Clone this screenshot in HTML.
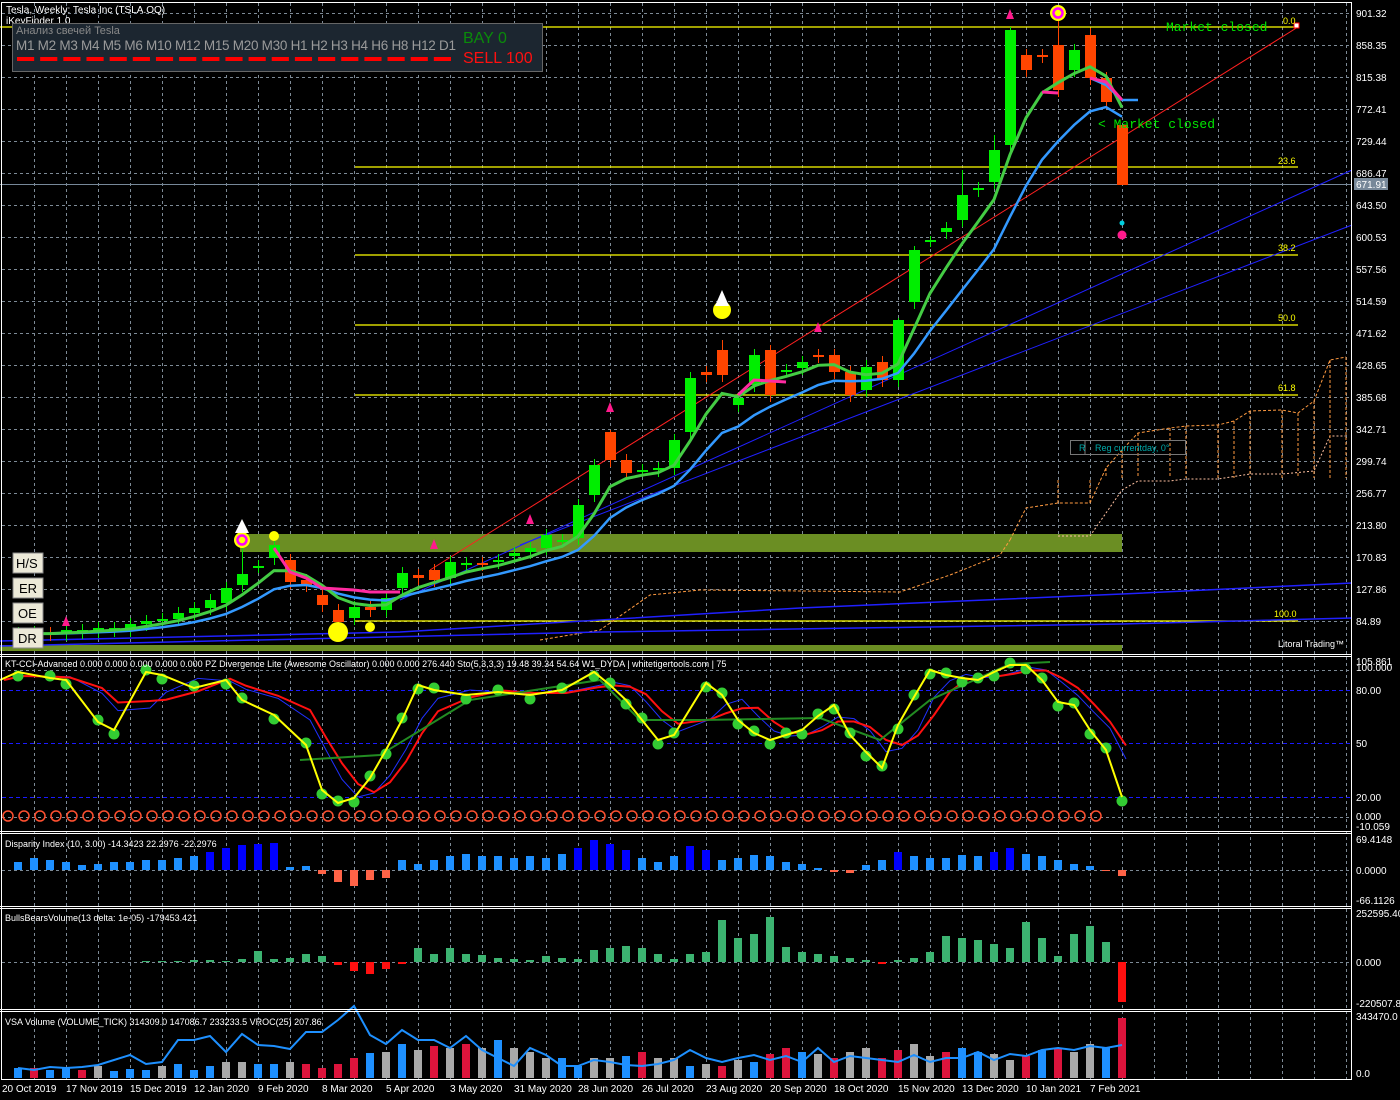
<!DOCTYPE html>
<html><head><meta charset="utf-8"><style>
html,body{margin:0;padding:0;background:#000;width:1400px;height:1100px;overflow:hidden}
svg{display:block}
text{font-family:"Liberation Sans",sans-serif;font-size:10px;fill:#fff}
.ax{font-size:10px;fill:#fff}
.mono{font-family:"Liberation Mono",monospace;font-size:13px;fill:#00e600}
.btn{fill:#ece9d8;stroke:#888}
.bt{font-size:13px;fill:#000}
</style></head><body>
<svg id="s" width="1400" height="1100" viewBox="0 0 1400 1100" xmlns="http://www.w3.org/2000/svg">
<rect width="1400" height="1100" fill="#000"/>
<g id="grid"></g>
<g id="draw"></g>
<g stroke="#fff" stroke-width="1" fill="none">
<rect x="1.5" y="2.5" width="1350" height="1077"/>
<line x1="0" y1="654.5" x2="1352" y2="654.5"/><line x1="0" y1="656.5" x2="1352" y2="656.5"/>
<line x1="0" y1="831.5" x2="1352" y2="831.5"/><line x1="0" y1="833.5" x2="1352" y2="833.5"/>
<line x1="0" y1="906.5" x2="1352" y2="906.5"/><line x1="0" y1="908.5" x2="1352" y2="908.5"/>
<line x1="0" y1="1009.5" x2="1352" y2="1009.5"/><line x1="0" y1="1011.5" x2="1352" y2="1011.5"/>
</g>
<text x="6" y="13">Tesla, Weekly:  Tesla Inc (TSLA.OQ)</text>
<text x="6" y="24">iKeyFinder 1.0</text>
<rect x="12.5" y="23.5" width="530" height="48" fill="#1c2630" stroke="#666"/>
<text x="16" y="34" style="font-size:11px;fill:#888">Анализ свечей Tesla</text>
<text x="16" y="50" style="font-size:13.5px;fill:#9a9a9a" textLength="440">M1 M2 M3 M4 M5 M6 M10 M12 M15 M20 M30 H1 H2 H3 H4 H6 H8 H12 D1</text>
<g id="dashes"></g>
<text x="463" y="43" style="font-size:16px;fill:#0a8a0a">BAY  0</text>
<text x="463" y="63" style="font-size:16px;fill:#ff1010">SELL 100</text>
<text x="1166" y="31" class="mono">Market closed</text>
<text x="1098" y="128" class="mono">&lt; Market closed</text>
<text x="1283" y="24" style="fill:#ff0;font-size:9px">0.0</text>
<text x="1278" y="164" style="fill:#ff0;font-size:9px">23.6</text>
<text x="1278" y="251" style="fill:#ff0;font-size:9px">38.2</text>
<text x="1278" y="321" style="fill:#ff0;font-size:9px">50.0</text>
<text x="1278" y="391" style="fill:#ff0;font-size:9px">61.8</text>
<text x="1274" y="617" style="fill:#ff0;font-size:9px">100.0</text>
<rect x="1070.5" y="440.5" width="115" height="14" fill="none" stroke="#777"/>
<line x1="1085" y1="441" x2="1085" y2="454" stroke="#777"/>
<text x="1079" y="451" style="fill:#0aa;font-size:9px">R</text>
<text x="1095" y="451" style="fill:#0aa;font-size:9px">Reg currentday, 0°</text>
<text x="1278" y="647" style="font-size:9px">Litoral Trading™</text>
<rect class="btn" x="13" y="553" width="30" height="20"/><text class="bt" x="16" y="568">H/S</text>
<rect class="btn" x="13" y="578" width="30" height="20"/><text class="bt" x="19" y="593">ER</text>
<rect class="btn" x="13" y="603" width="30" height="20"/><text class="bt" x="18" y="618">OE</text>
<rect class="btn" x="13" y="628" width="30" height="20"/><text class="bt" x="18" y="643">DR</text>
<g id="axis" class="ax"></g>
<rect x="1354" y="178" width="34" height="12" fill="#778899"/>
<text x="1356" y="188" style="fill:#fff">671.91</text>
<text x="5" y="667" style="font-size:9px">KT-CCI-Advanced 0.000 0.000 0.000 0.000 0.000 PZ Divergence Lite (Awesome Oscillator) 0.000 0.000 276.440 Sto(5,3,3,3) 19.48 39.34 54.64 W1_DYDA  | whitetigertools.com | 75</text>
<text x="5" y="847" style="font-size:9px">Disparity Index (10, 3.00) -14.3423 22.2976 -22.2976</text>
<text x="5" y="921" style="font-size:9px">BullsBearsVolume(13  delta: 1e-05)  -179453.421</text>
<text x="5" y="1025" style="font-size:9px">VSA Volume (VOLUME_TICK) 314309.0 147086.7 233233.5 VROC(25) 207.86</text>
<g class="ax" style="font-size:9px">
<text x="1356" y="665">105.861</text><text x="1356" y="671">100.000</text>
<text x="1356" y="694">80.00</text><text x="1356" y="747">50</text>
<text x="1356" y="801">20.00</text><text x="1356" y="820">0.000</text><text x="1356" y="830">-10.059</text>
<text x="1356" y="843">69.4148</text><text x="1356" y="874">0.0000</text><text x="1356" y="904">-66.1126</text>
<text x="1356" y="917">252595.40</text><text x="1356" y="966">0.000</text><text x="1356" y="1007">-220507.8</text>
<text x="1356" y="1020">343470.0</text><text x="1356" y="1077">0.0</text>
</g>
<g style="font-size:9px">
<text x="2" y="1092">20 Oct 2019</text><text x="66" y="1092">17 Nov 2019</text><text x="130" y="1092">15 Dec 2019</text>
<text x="194" y="1092">12 Jan 2020</text><text x="258" y="1092">9 Feb 2020</text><text x="322" y="1092">8 Mar 2020</text>
<text x="386" y="1092">5 Apr 2020</text><text x="450" y="1092">3 May 2020</text><text x="514" y="1092">31 May 2020</text>
<text x="578" y="1092">28 Jun 2020</text><text x="642" y="1092">26 Jul 2020</text><text x="706" y="1092">23 Aug 2020</text>
<text x="770" y="1092">20 Sep 2020</text><text x="834" y="1092">18 Oct 2020</text><text x="898" y="1092">15 Nov 2020</text>
<text x="962" y="1092">13 Dec 2020</text><text x="1026" y="1092">10 Jan 2021</text><text x="1090" y="1092">7 Feb 2021</text>
</g>
</svg>
<script>
(function(){
var NS="http://www.w3.org/2000/svg";
function el(p,t,a){var e=document.createElementNS(NS,t);for(var k in a)e.setAttribute(k,a[k]);p.appendChild(e);return e;}
var G=document.getElementById('grid'),D=document.getElementById('draw'),A=document.getElementById('axis');
var gs={stroke:"#7d8a96","stroke-width":1,"stroke-dasharray":"3,3"};
var i,x,y,v,cx,col;
for(x=34;x<1352;x+=32){el(G,'line',Object.assign({x1:x+.5,y1:3,x2:x+.5,y2:1080},gs));}
var lab=["901.32","858.35","815.38","772.41","729.44","686.47","643.50","600.53","557.56","514.59","471.62","428.65","385.68","342.71","299.74","256.77","213.80","170.83","127.86","84.89"];
for(i=0;i<20;i++){y=13+32*i;el(G,'line',Object.assign({x1:2,y1:y+.5,x2:1352,y2:y+.5},gs));var t=el(A,'text',{x:1356,y:y+4});t.textContent=lab[i];}
[690,743,797].forEach(function(yy){el(G,'line',{x1:2,y1:yy+.5,x2:1352,y2:yy+.5,stroke:"#1a1aff","stroke-dasharray":"4,3"});});
[670,817,870,962].forEach(function(yy){el(G,'line',Object.assign({x1:2,y1:yy+.5,x2:1352,y2:yy+.5},gs));});
var dh=document.getElementById('dashes');
for(i=0;i<19;i++){var xx=16+i*(440/19);el(dh,'rect',{x:xx+1,y:57,width:(440/19)-6,height:4,fill:"#ff0000"});}
el(D,'rect',{x:240,y:534,width:882,height:18,fill:"#6b8e23"});
el(D,'rect',{x:0,y:645,width:1122,height:6,fill:"#6b8e23"});
[27,167,255,325,395,621].forEach(function(yy){el(D,'line',{x1:355,y1:yy,x2:1298,y2:yy,stroke:"#ffff00","stroke-width":1.3});});
el(D,'line',{x1:0,y1:184.5,x2:1352,y2:184.5,stroke:"#778899"});
el(D,'line',{x1:0,y1:27,x2:355,y2:27,stroke:"#ffff00","stroke-width":1.3});
var tp=[[1010,540],[1026,508],[1058,503],[1090,503],[1106,468],[1122,450],[1138,433],[1170,428],[1186,426],[1218,425],[1234,421],[1250,411],[1282,410],[1298,413],[1314,401],[1330,360],[1346,357]];
var bt=[[1058,536],[1090,536],[1122,490],[1138,481],[1170,481],[1186,479],[1218,479],[1250,474],[1282,474],[1314,471],[1330,436],[1346,436]];
el(D,'polyline',{points:tp.map(function(p){return p.join(',')}).join(' '),fill:"none",stroke:"#ff9a40","stroke-dasharray":"3,2"});
el(D,'polyline',{points:bt.map(function(p){return p.join(',')}).join(' '),fill:"none",stroke:"#ffc0a0","stroke-dasharray":"2,2"});
for(i=0;i<tp.length;i++){var tx=tp[i][0];if(tx>=1058){el(D,'line',{x1:tx,y1:tp[i][1],x2:tx,y2:478,stroke:"#ff9a40","stroke-dasharray":"3,2"});}}
el(D,'polyline',{points:"540,640 600,630 650,595 700,590 900,592 950,575 1000,555 1010,540",fill:"none",stroke:"#ff9a40","stroke-dasharray":"3,2"});
el(D,'line',{x1:430,y1:570,x2:1298,y2:27,stroke:"#ff2020"});
el(D,'line',{x1:400,y1:600,x2:1352,y2:170,stroke:"#2020ff"});
el(D,'line',{x1:520,y1:545,x2:1352,y2:225,stroke:"#2020ff"});
el(D,'polyline',{points:"0,641 400,632 800,608 1122,594 1352,583",fill:"none",stroke:"#2020ff","stroke-width":1.5});
el(D,'polyline',{points:"0,646 600,632 1122,624 1352,618",fill:"none",stroke:"#2020ff","stroke-width":1.5});
el(D,'rect',{x:1294,y:23,width:5,height:5,fill:"#fff",stroke:"#f00"});
var C=[[635,633],[634,632],[633,634],[634,630],[632,630],[631,628],[630,628],[630,624],[624,621],[621,619],[619,613],[613,608],[608,600],[603,588],[585,574],[566,566],[558,545],[560,582],[580,585],[595,605],[610,622],[618,607],[607,610],[610,598],[588,573],[575,578],[570,580],[578,562],[565,563],[563,564],[562,560],[556,553],[552,548],[548,535],[540,540],[538,505],[495,465],[432,460],[460,473],[470,470],[470,468],[468,440],[432,378],[372,375],[350,375],[405,398],[385,355],[350,395],[370,370],[368,362],[355,356],[355,372],[372,395],[390,367],[362,380],[380,320],[302,250],[240,240],[232,228],[220,195],[190,188],[182,150],[145,30],[55,70],[55,56],[45,90],[70,50],[35,78],[78,102],[125,185]];
var hw={14:545,44:340,47:345,37:430,62:27,65:10,67:28,69:225,55:318,56:246,61:135,53:360,57:236,59:170};
var mid=[];
for(i=0;i<C.length;i++){cx=18+16*i;var o=C[i][0],c=C[i][1];col=(c>o)?"#ff4500":"#00ee00";
 var t1=Math.min(o,c),b1=Math.max(o,c);var h=Math.max(b1-t1,2);
 var hi=hw[i]!==undefined?hw[i]:t1-6,lo=b1+7;if(i==69)lo=225;
 el(D,'line',{x1:cx+.5,y1:hi,x2:cx+.5,y2:lo,stroke:col});
 el(D,'rect',{x:cx-5,y:t1,width:11,height:h,fill:col});
 mid.push((o+c)/2);}
function ema(arr,n){var k=2/(n+1),r=[],vv=arr[0];for(var j=0;j<arr.length;j++){vv=arr[j]*k+vv*(1-k);r.push(vv);}return r;}
var g=ema(mid,4),b=ema(mid,9);
function pts(a){return a.map(function(vv,j){return (18+16*j)+','+vv.toFixed(1)}).join(' ');}
el(D,'polyline',{points:pts(b),fill:"none",stroke:"#3399ff","stroke-width":2.5});
el(D,'polyline',{points:pts(g),fill:"none",stroke:"#44cc44","stroke-width":3});
el(D,'polyline',{points:"274,548 290,572 306,578 322,588 354,590 370,592 400,592",fill:"none",stroke:"#ff2aa0","stroke-width":3});
el(D,'polyline',{points:"738,395 754,380 786,382",fill:"none",stroke:"#ff2aa0","stroke-width":3});
el(D,'polyline',{points:"1042,92 1058,93",fill:"none",stroke:"#ff2aa0","stroke-width":3});
el(D,'polyline',{points:"1090,78 1106,85 1122,100 1138,100",fill:"none",stroke:"#3399ff","stroke-width":2.5});
el(D,'polyline',{points:"1090,78 1106,82 1122,100",fill:"none",stroke:"#ff2aa0","stroke-width":3});
[[242,540],[1058,13]].forEach(function(p){el(D,'circle',{cx:p[0],cy:p[1],r:8,fill:"#ffff00"});el(D,'circle',{cx:p[0],cy:p[1],r:4.5,fill:"none",stroke:"#ff00ff","stroke-width":2.5});});
[[274,536,5],[722,310,9],[338,632,10],[370,627,5]].forEach(function(p){el(D,'circle',{cx:p[0],cy:p[1],r:p[2],fill:"#ffff00"});});
el(D,'polygon',{points:"722,290 715,306 729,306",fill:"#fff"});el(D,'polygon',{points:"242,519 235,533 249,533",fill:"#fff"});
el(D,'circle',{cx:1122,cy:235,r:4.5,fill:"#ff1a8c"});el(D,'circle',{cx:1122,cy:223,r:2.5,fill:"#00d0e0"});
[[66,622],[610,408],[818,328],[530,520],[1010,15],[434,545]].forEach(function(p){el(D,'polygon',{points:(p[0])+','+(p[1]-6)+' '+(p[0]-4)+','+(p[1]+4)+' '+(p[0]+4)+','+(p[1]+4),fill:"#ff1a8c"});});
var Y=[[0,680],[18,672],[50,678],[66,680],[98,722],[114,730],[146,672],[162,675],[194,688],[226,680],[242,700],[274,715],[306,745],[322,790],[338,803],[354,798],[370,778],[386,750],[402,720],[418,685],[434,690],[466,695],[498,692],[530,695],[562,690],[594,672],[610,685],[626,700],[642,720],[658,740],[674,735],[706,683],[722,695],[738,720],[754,733],[770,740],[786,735],[802,730],[818,716],[834,705],[850,735],[866,752],[882,768],[898,725],[914,697],[930,670],[946,675],[962,678],[978,680],[994,672],[1010,665],[1026,665],[1042,680],[1058,702],[1074,705],[1090,730],[1106,750],[1122,797]];
function sm(a,d){return a.map(function(p,j){var s=0,n=0;for(var q=Math.max(0,j-d);q<=j;q++){s+=a[q][1];n++;}return [p[0]+4,s/n];});}
var red=sm(Y,3),blu=sm(Y,2);
el(D,'polyline',{points:blu.map(function(p){return p.join(',')}).join(' '),fill:"none",stroke:"#2030ff","stroke-width":1});
el(D,'polyline',{points:red.map(function(p){return p.join(',')}).join(' '),fill:"none",stroke:"#ff1010","stroke-width":2});
el(D,'polyline',{points:"300,760 380,755 470,700 600,680 640,720 700,720 820,718 880,740 930,700 1010,664 1050,662",fill:"none",stroke:"#228b22","stroke-width":2});
for(i=0;i<Y.length;i++){if(Y[i][0]%16==2){el(D,'circle',{cx:Y[i][0],cy:Y[i][1]+(i%2?4:-2),r:5.5,fill:"#33cc33"});}}
el(D,'polyline',{points:Y.map(function(p){return p.join(',')}).join(' '),fill:"none",stroke:"#ffff00","stroke-width":2});
for(i=0;i<69;i++){el(D,'circle',{cx:8+16*i,cy:816,r:5,fill:"none",stroke:"#ff5030","stroke-width":1.5});}
var Dv=[8,12,10,8,5,6,8,8,10,10,12,14,18,22,25,26,27,3,4,-4,-12,-16,-10,-8,10,6,10,14,16,14,14,12,14,12,16,22,30,26,20,12,8,14,24,20,10,12,15,14,8,6,2,-2,-3,5,10,18,14,12,12,15,14,18,22,16,14,10,6,4,-1,-6];
for(i=0;i<Dv.length;i++){v=Dv[i];cx=18+16*i;col=v<0?"#ff6347":(v>17?"#0000ff":"#1e90ff");el(D,'rect',{x:cx-4,y:v>0?870-v:870,width:8,height:Math.abs(v),fill:col});}
var Bv=[0,0,0,0,0,0,0,0,1,1,1,2,2,1,3,11,3,4,8,6,-3,-9,-12,-7,-2,14,8,14,8,7,4,3,2,6,4,3,12,14,16,14,8,3,8,10,42,24,28,45,15,10,8,6,4,2,-2,2,4,10,26,24,22,18,14,40,24,6,28,36,20,-40];
for(i=0;i<Bv.length;i++){v=Bv[i];cx=18+16*(i-Bv.length+70);el(D,'rect',{x:cx-4,y:v>0?962-v:962,width:8,height:Math.abs(v),fill:v<0?"#ff1010":"#3cb371"});}
var Vv=[10,10,8,10,8,12,7,9,8,12,14,8,12,16,16,14,14,16,14,10,14,20,25,26,34,28,32,30,34,30,38,30,26,20,20,12,20,20,22,26,20,20,12,14,12,18,16,24,30,26,24,20,26,30,20,28,34,22,26,30,26,24,18,22,28,30,26,34,30,60];
var Vc="bRbbRgbbbgbbbggbbgRRRRbgbgRgRgbgggbbggbRggbgRgbRRbgRggRRggRbbggRbRggbR";
for(i=0;i<Vv.length;i++){cx=18+16*i;var ch=Vc[i]||'g';if(i==Vv.length-1)ch='R';col=ch=='b'?"#1e90ff":(ch=='R'?"#dc143c":"#a9a9a9");el(D,'rect',{x:cx-4,y:1078-Vv[i],width:8,height:Vv[i],fill:col});}
var Vl=[1068,1070,1067,1068,1067,1065,1060,1055,1064,1062,1040,1040,1036,1052,1034,1045,1046,1049,1032,1032,1020,1006,1035,1044,1030,1040,1040,1048,1036,1050,1058,1066,1048,1055,1066,1066,1060,1062,1065,1066,1064,1060,1050,1058,1062,1058,1055,1060,1056,1062,1048,1062,1056,1058,1060,1062,1055,1062,1058,1058,1052,1060,1054,1056,1050,1048,1050,1046,1048,1045];
el(D,'polyline',{points:Vl.map(function(vv,j){return (18+16*j)+','+vv}).join(' '),fill:"none",stroke:"#1e90ff","stroke-width":2});
})();
</script>
</body></html>
